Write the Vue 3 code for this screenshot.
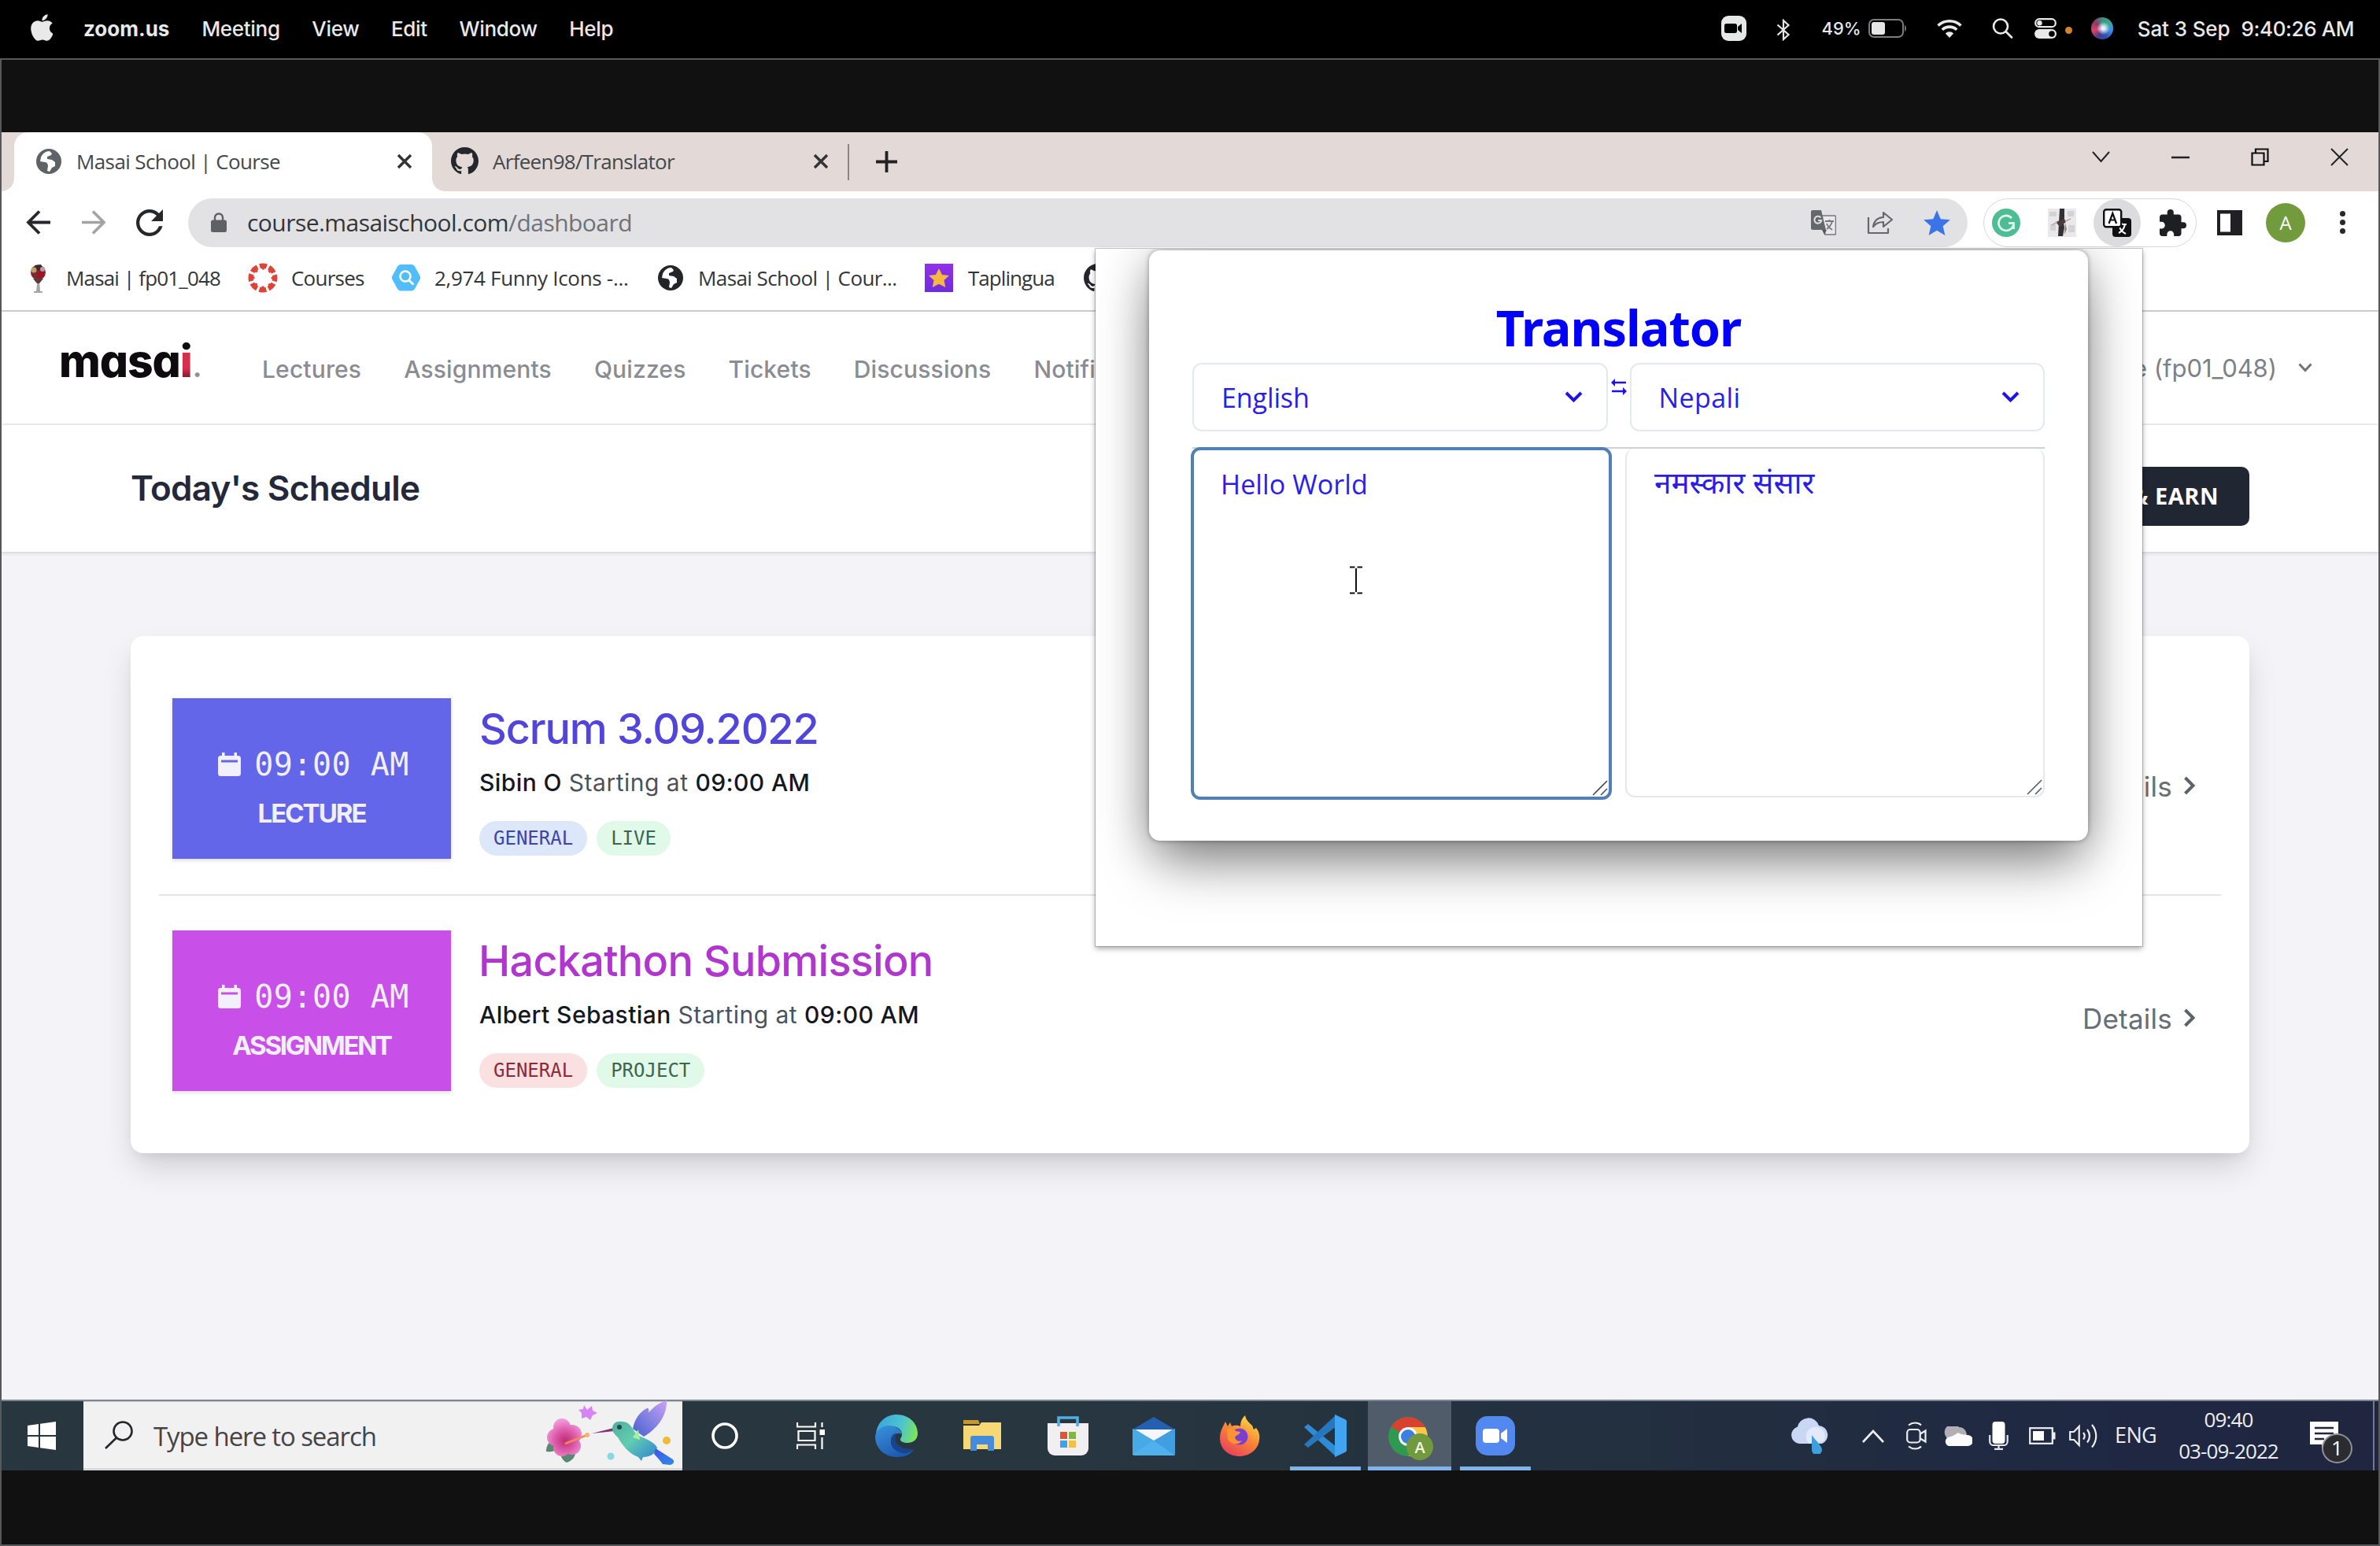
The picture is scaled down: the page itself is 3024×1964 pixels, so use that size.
<script setup>
const menus = ['Meeting', 'View', 'Edit', 'Window', 'Help']
const nav = ['Lectures', 'Assignments', 'Quizzes', 'Tickets', 'Discussions', 'Notifications']
const schedule = [
  {
    kind: 'lecture', label: 'LECTURE', title: 'Scrum 3.09.2022', host: 'Sibin O', time: '09:00 AM',
    tags: [{ text: 'GENERAL', tone: 'blue' }, { text: 'LIVE', tone: 'green' }],
  },
  {
    kind: 'assignment', label: 'ASSIGNMENT', title: 'Hackathon Submission', host: 'Albert Sebastian', time: '09:00 AM',
    tags: [{ text: 'GENERAL', tone: 'red' }, { text: 'PROJECT', tone: 'green' }],
  },
]
const githubPath = 'M8 0C3.58 0 0 3.58 0 8c0 3.54 2.29 6.53 5.47 7.59.4.07.55-.17.55-.38 0-.19-.01-.82-.01-1.49-2.01.37-2.53-.49-2.69-.94-.09-.23-.48-.94-.82-1.13-.28-.15-.68-.52-.01-.53.63-.01 1.08.58 1.23.82.72 1.21 1.87.87 2.33.66.07-.52.28-.87.51-1.07-1.78-.2-3.64-.89-3.64-3.95 0-.87.31-1.59.82-2.15-.08-.2-.36-1.02.08-2.12 0 0 .67-.21 2.2.82.64-.18 1.32-.27 2-.27s1.36.09 2 .27c1.53-1.04 2.2-.82 2.2-.82.44 1.1.16 1.92.08 2.12.51.56.82 1.27.82 2.15 0 3.07-1.87 3.75-3.65 3.95.29.25.54.73.54 1.48 0 1.07-.01 1.93-.01 2.2 0 .21.15.46.55.38A8.01 8.01 0 0 0 16 8c0-4.42-3.58-8-8-8z'
</script>

<template>
  <div class="screen">
    <header class="macbar">
      <svg class="apple" width="28" height="34" viewBox="4 30 366 452" fill="#e9e9e9"><path d="M318.7 268.7c-.2-36.7 16.4-64.4 50-84.8-18.8-26.9-47.2-41.7-84.7-44.6-35.5-2.8-74.3 20.7-88.5 20.7-15 0-49.4-19.7-76.4-19.7C63.3 141.2 4 184.8 4 273.5q0 39.3 14.4 81.2c12.8 36.7 59 126.7 107.2 125.2 25.2-.6 43-17.9 75.8-17.9 31.8 0 48.3 17.9 76.4 17.9 48.6-.7 90.4-82.5 102.6-119.3-65.2-30.7-61.7-90-61.7-91.9zm-56.6-164.2c27.3-32.4 24.8-61.9 24-72.5-24.1 1.4-52 16.4-67.9 34.9-17.5 19.8-27.8 44.3-25.6 71.9 26.1 2 49.9-11.4 69.5-34.3z"/></svg>
      <b class="app">zoom.us</b>
      <nav class="menus"><span v-for="m in menus" :key="m">{{ m }}</span></nav>
      <div class="status">
        <svg width="32" height="32" viewBox="0 0 32 32"><rect width="32" height="32" rx="9" fill="#e6e8e8"/><rect x="4" y="10" width="16" height="12" rx="2.5" fill="#000"/><path d="M21 14l5-4v12l-5-4z" fill="#000"/></svg>
        <svg class="bt" width="18" height="28" viewBox="0 0 18 28" fill="none" stroke="#e6e6e6" stroke-width="2.2"><path d="M1.500 7.500L15.500 20 9 26V2l6.500 6L1.500 20.500"/></svg>
        <span class="pct">49%</span>
        <svg class="bat" width="49" height="24" viewBox="0 0 49 24"><rect x="1" y="1" width="43" height="22" rx="6" fill="none" stroke="#7c7c7c" stroke-width="2"/><rect x="4" y="4" width="17" height="16" rx="3" fill="#e6e6e6"/><path d="M46 8c2.500 1 2.500 7 0 8z" fill="#7c7c7c"/></svg>
        <svg class="wifi" width="32" height="24" viewBox="0 0 32 24" fill="none" stroke="#e9e9e9" stroke-width="3.600"><path d="M1.500 8.500a21 21 0 0 1 29 0M6.800 13.700a13.500 13.500 0 0 1 18.400 0"/><path d="M16 24l-5.200-5.600a7.500 7.500 0 0 1 10.400 0z" fill="#e9e9e9" stroke="none"/></svg>
        <svg class="find" width="27" height="26" viewBox="0 0 27 26" fill="none" stroke="#e9e9e9" stroke-width="2.600" stroke-linecap="round"><circle cx="11" cy="10.500" r="9"/><path d="M18 17.500l7 7"/></svg>
        <svg class="cc" width="28" height="26" viewBox="0 0 28 26"><rect x="1.200" y="1.200" width="25.600" height="10" rx="5" fill="none" stroke="#e9e9e9" stroke-width="2.200"/><circle cx="6.500" cy="6.200" r="3.200" fill="#e9e9e9"/><rect y="14" width="28" height="12" rx="6" fill="#e9e9e9"/><circle cx="22" cy="20" r="3.800" fill="#000"/></svg>
        <i class="dot"></i>
        <i class="siri"></i>
        <span class="date">Sat 3 Sep</span><span class="clock">9:40:26 AM</span>
      </div>
    </header>

    <main class="frame">
      <div class="chrome">
        <div class="tabs">
          <div class="tab active">
            <svg width="32" height="32" viewBox="0 0 32 32"><circle cx="16" cy="16" r="16" fill="#5f6368"/><path d="M17 3c-5 0-9 3-11 8l-1 5 6 1c3 0 4 3 4 5l-1 6 3 1 3-5 4-2v-5l-4-3-6-1v-3l5-2 1-2z" fill="#fff"/></svg>
            <span class="tab-text t1">Masai School | Course</span>
            <svg class="x" width="20" height="20" viewBox="0 0 20 20" stroke="#333" stroke-width="3.400"><path d="M2 2l16 16M18 2L2 18"/></svg>
          </div>
          <div class="tab second">
            <svg width="35" height="35" viewBox="0 0 16 16" fill="#24262b"><path :d="githubPath"/></svg>
            <span class="tab-text t2">Arfeen98/Translator</span>
            <svg class="x" width="20" height="20" viewBox="0 0 20 20" stroke="#333" stroke-width="3.400"><path d="M2 2l16 16M18 2L2 18"/></svg>
          </div>
          <i class="sep"></i>
          <svg class="plus" width="27" height="27" viewBox="0 0 27 27" stroke="#222" stroke-width="3.800"><path d="M13.500 0v27M0 13.500h27"/></svg>
          <div class="winctl">
            <svg width="23" height="15" viewBox="0 0 23 15" fill="none" stroke="#222" stroke-width="2"><path d="M1 1l10.500 12L22 1"/></svg>
            <svg width="23" height="4" viewBox="0 0 23 4"><path d="M0 2h23" stroke="#222" stroke-width="2.500"/></svg>
            <svg width="23" height="23" viewBox="0 0 23 23" fill="none" stroke="#111" stroke-width="2.200"><path d="M1.500 6.500h15v15h-15zM6 6V1.500h15.500V17H17"/></svg>
            <svg width="23" height="23" viewBox="0 0 23 23" stroke="#222" stroke-width="2"><path d="M1 1l21 21M22 1L1 22"/></svg>
          </div>
        </div>

        <div class="toolbar">
          <svg class="back" width="31" height="31" viewBox="0 0 31 31" fill="none" stroke="#26272b" stroke-width="3.800"><path d="M31 15.500H4M17 1.500l-14 14 14 14"/></svg>
          <svg class="fwd" width="31" height="31" viewBox="0 0 31 31" fill="none" stroke="#a3a3a6" stroke-width="3.600"><path d="M0 15.500h27M14 1.500l14 14-14 14"/></svg>
          <svg class="reload" width="34" height="34" viewBox="4 4 16 16" fill="#26272b"><path d="M17.65 6.350A7.958 7.958 0 0 0 12 4c-4.420 0-7.990 3.580-7.990 8s3.570 8 7.990 8c3.730 0 6.840-2.550 7.730-6h-2.080A5.990 5.990 0 0 1 12 18c-3.310 0-6-2.690-6-6s2.690-6 6-6c1.660 0 3.140.690 4.220 1.780L13 11h7V4l-2.350 2.350z"/></svg>
          <div class="url">
            <svg class="lock" width="20" height="25" viewBox="0 0 20 25"><path d="M5 11V6.500a5 5 0 0 1 10 0V11" fill="none" stroke="#5f6063" stroke-width="2.400"/><rect y="9.500" width="20" height="15.500" rx="2.500" fill="#5f6063"/></svg>
            <span class="url-text">course.masaischool.com<em>/dashboard</em></span>
            <svg class="gtr" width="32" height="32" viewBox="0 0 32 32"><path d="M13 7h17a1.500 1.500 0 0 1 1.500 1.500v21A1.500 1.500 0 0 1 30 31H18z" fill="#e9e9eb" stroke="#77787c" stroke-width="1.600"/><path d="M2 0h11l6 25H2a2 2 0 0 1-2-2V2a2 2 0 0 1 2-2z" fill="#66676b"/><path d="M12.500 9.500a4.500 4.500 0 1 0 .8 3.500H9" fill="none" stroke="#dedee0" stroke-width="2"/><path d="M18 14h11M23.500 12v2M27 14c-1 4-4 8-7 10M20 17c1 3 4 6 7 8" fill="none" stroke="#77787c" stroke-width="1.800"/><path d="M14 25h6l-3 6z" fill="#55565a"/></svg>
            <svg class="share" width="34" height="30" viewBox="0 0 34 30" fill="none" stroke="#67686c" stroke-width="2.200" stroke-linejoin="round"><path d="M2 8v20h25v-6"/><path d="M21 8V2l11 9-11 9v-6c-6 0-10 2-13 6 1-7 5-11.500 13-12z"/></svg>
            <svg class="star" width="34" height="32" viewBox="2 2 20 19" fill="#3b73e8"><path d="M12 17.270 18.180 21l-1.640-7.030L22 9.240l-7.190-.610L12 2 9.190 8.630 2 9.240l5.460 4.730L5.820 21z"/></svg>
          </div>
          <div class="exts">
            <svg width="36" height="36" viewBox="0 0 36 36"><circle cx="18" cy="18" r="18" fill="#4dbd93"/><path d="M25 12a9.500 9.500 0 1 0 2.500 6.500H21M27.500 18.500V26" fill="none" stroke="#e8fff6" stroke-width="2.600"/></svg>
            <svg class="face" width="36" height="36" viewBox="0 0 36 36"><rect width="36" height="36" fill="#e9e8ea"/><path d="M2 4h9v6H2zM25 3h8v7h-8zM3 20h7v8H3zM26 21h8v9h-8z" fill="#d3d3d6"/><path d="M15 0h6v12l-1 6 1 6-2 11h-6l1-17z" fill="#333032"/><path d="M10 17l11-4 2 4-8 6z" fill="#4a3b3c"/><path d="M5 21l7-4M22 16l7-3" fill="none" stroke="#c3a5a0" stroke-width="1.600"/><path d="M22 18l2 8-3 7z" fill="#8c7f7f"/></svg>
            <span class="halo">
              <svg width="36" height="36" viewBox="0 0 36 36"><rect x="12" y="12" width="24" height="24" rx="4" fill="#101012"/><path d="M18 20h12M24 18v2M28 20c-1 5-4 9-8 11M21 23c1 4 4 7 8 9" fill="none" stroke="#fff" stroke-width="2"/><rect x="1.200" y="1.200" width="22" height="22" rx="3" fill="#fff" stroke="#101012" stroke-width="2.400"/><path d="M7.500 19l4.800-13 4.800 13M9 14.500h6.500" fill="none" stroke="#101012" stroke-width="2.200"/></svg>
            </span>
            <svg class="puzzle" width="34" height="34" viewBox="2 1 21 21" fill="#1e1f23"><path d="M20.500 11H19V7c0-1.100-.9-2-2-2h-4V3.500a2.500 2.500 0 0 0-5 0V5H4c-1.100 0-1.990.9-1.990 2v3.800H3.500c1.490 0 2.700 1.210 2.700 2.700s-1.210 2.700-2.700 2.700H2V20c0 1.100.9 2 2 2h3.800v-1.500c0-1.490 1.210-2.700 2.700-2.700 1.490 0 2.700 1.210 2.700 2.700V22H17c1.100 0 2-.9 2-2v-4h1.500a2.500 2.500 0 0 0 0-5z"/></svg>
          </div>
          <svg class="panel" width="32" height="32" viewBox="0 0 32 32"><rect width="32" height="32" fill="#202024"/><rect x="4" y="4.500" width="13" height="23" fill="#fff"/></svg>
          <span class="avatar">A</span>
          <span class="dots"><i></i><i></i><i></i></span>
        </div>

        <div class="bookmarks">
          <div class="bm b1"><svg width="27" height="37" viewBox="0 0 27 37"><path d="M12.500 22h2.500l1 13h3v2H8v-2h3z" fill="#a9a5a5"/><circle cx="13.500" cy="11" r="9.500" fill="#7c2a35"/><path d="M3 11l6 4M9 2l8-1 3 5-8 3z" fill="#3f2a2a"/><circle cx="8" cy="8" r="3.500" fill="#bfa06a"/><circle cx="17" cy="14" r="4.500" fill="#a5121f"/><circle cx="19" cy="7" r="3" fill="#b89cae"/><path d="M7 19h13l-5 6h-3z" fill="#5b3a38"/></svg><span>Masai | fp01_048</span></div>
          <div class="bm b2"><svg width="38" height="38" viewBox="0 0 38 38"><circle cx="19" cy="19" r="15" fill="none" stroke="#dc4439" stroke-width="7" stroke-dasharray="8.800 2.980" stroke-dashoffset="4.400"/><circle cx="19" cy="19" r="12" fill="#fff"/><circle cx="19" cy="19" r="11.500" fill="none" stroke="#dc4439" stroke-width="2" stroke-dasharray="3 6.030" stroke-dashoffset="1.500"/></svg><span>Courses</span></div>
          <div class="bm b3"><svg width="36" height="34" viewBox="0 0 36 34"><path d="M11 0h14a5 5 0 0 1 4 2.500l6 11a6 6 0 0 1 0 6.500l-6 11a5 5 0 0 1-4 2.500H11A5 5 0 0 1 7 31L1 20a6 6 0 0 1 0-6.500l6-11A5 5 0 0 1 11 0z" fill="#51bdfb"/><circle cx="17" cy="15" r="6.500" fill="none" stroke="#fff" stroke-width="2.600"/><path d="M21.500 20l6 5.500" stroke="#fff" stroke-width="3"/></svg><span>2,974 Funny Icons -...</span></div>
          <div class="bm b4"><svg width="32" height="32" viewBox="0 0 32 32"><circle cx="16" cy="16" r="16" fill="#232529"/><path d="M17 3c-5 0-9 3-11 8l-1 5 6 1c3 0 4 3 4 5l-1 6 3 1 3-5 4-2v-5l-4-3-6-1v-3l5-2 1-2z" fill="#fff"/></svg><span>Masai School | Cour...</span></div>
          <div class="bm b5"><svg width="36" height="36" viewBox="0 0 36 36"><defs><linearGradient id="tap" x1="0" y1="0" x2="0" y2="1"><stop offset="0" stop-color="#9430ea"/><stop offset="1" stop-color="#6c2ce0"/></linearGradient></defs><rect width="36" height="36" fill="url(#tap)"/><path d="M18 6l4 8 9 1-6.500 6 1.800 9-8.300-4.300L9.700 30l1.800-9L5 15l9-1z" fill="#f5b93f"/></svg><span>Taplingua</span></div>
          <div class="bm b6"><svg width="36" height="36" viewBox="0 0 16 16" fill="#24262b"><path :d="githubPath"/></svg></div>
        </div>
      </div>

      <section class="page">
        <div class="site-head">
          <span class="logo">masa<span class="logo-i">i</span><span class="logo-dot">.</span></span>
          <nav class="nav"><span v-for="n in nav" :key="n">{{ n }}</span></nav>
          <span class="user">e (fp01_048)</span>
          <svg class="user-chev" width="18" height="12" viewBox="0 0 18 12" fill="none" stroke="#707379" stroke-width="3"><path d="M1.500 1.500L9 9.500l7.500-8"/></svg>
        </div>
        <div class="title-row"><h1>Today's Schedule</h1><button>REFER &amp; EARN</button></div>

        <div class="card">
          <article v-for="s in schedule" :key="s.label" class="row" :class="s.kind">
            <div class="badge">
              <div class="badge-time">
                <svg width="29" height="30" viewBox="0 0 29 30" fill="#f3f0fd"><path d="M5 0h3.500v4h12V0H24v4h1.500A3.500 3.500 0 0 1 29 7.500v2H0v-2A3.500 3.500 0 0 1 3.500 4H5zM0 12.500h29v14A3.500 3.500 0 0 1 25.500 30h-22A3.500 3.500 0 0 1 0 26.500z"/><path d="M0 9h4v4H0zM25 9h4v4h-4z"/></svg>
                <span>{{ s.time }}</span>
              </div>
              <div class="badge-label">{{ s.label }}</div>
            </div>
            <div class="info">
              <h2>{{ s.title }}</h2>
              <p><b>{{ s.host }}</b> <span>Starting at</span> <b>{{ s.time }}</b></p>
              <div class="tags"><span v-for="t in s.tags" :key="t.text" :class="t.tone">{{ t.text }}</span></div>
            </div>
            <div class="details">Details<svg width="16" height="24" viewBox="0 0 16 24" fill="none" stroke="#5f6369" stroke-width="4"><path d="M2.500 2l10 10-10 10"/></svg></div>
          </article>
        </div>

        <aside class="popup">
          <div class="translator">
            <h3>Translator</h3>
            <div class="selects">
              <div class="select"><span class="l1">English</span><svg width="23" height="15" viewBox="0 0 23 15" fill="none" stroke="#1f14e6" stroke-width="4"><path d="M2 2l9.500 9.500L21 2"/></svg></div>
              <svg class="swap" width="20" height="21" viewBox="0 0 20 21" fill="#1c12ee"><path d="M0 5l5-5v3.700h14v2.600H5V10zM20 16l-5 5v-3.700H1v-2.600h14V11z"/></svg>
              <div class="select"><span class="l2">Nepali</span><svg width="23" height="15" viewBox="0 0 23 15" fill="none" stroke="#1f14e6" stroke-width="4"><path d="M2 2l9.500 9.500L21 2"/></svg></div>
            </div>
            <div class="areas">
              <div class="area focus">Hello World<svg class="grip" width="22" height="20" viewBox="0 0 22 20" stroke="#4a4d55" stroke-width="1.600"><path d="M1 19L19 1M11 19l8-8"/></svg></div>
              <div class="area out">नमस्कार संसार<svg class="grip" width="22" height="20" viewBox="0 0 22 20" stroke="#55585e" stroke-width="1.600"><path d="M1 19L19 1M11 19l8-8"/></svg></div>
            </div>
          </div>
          <svg class="ibeam" width="16" height="36" viewBox="0 0 16 36" fill="none" stroke="#111" stroke-width="2"><path d="M0 1.500h6.500M9.500 1.500H16M8 3v30M0 34.500h6.500M9.500 34.500H16"/></svg>
        </aside>
      </section>

      <footer class="taskbar">
        <div class="start"><svg width="36" height="36" viewBox="0 0 36 36" fill="#fff"><path d="M0 5l14-2v14H0zM16 2.700L36 0v17H16zM0 19h14v14L0 31zM16 19h20v17l-20-2.700z"/></svg></div>
        <div class="search">
          <svg width="36" height="36" viewBox="0 0 36 36" fill="none" stroke="#26262a" stroke-width="2.600"><circle cx="23" cy="13" r="11.500"/><path d="M15 21.500L1 35"/></svg>
          <span>Type here to search</span>
          <svg class="bird" width="170" height="89" viewBox="0 0 170 89">
            <defs>
              <linearGradient id="body" x1="0" y1="0" x2="1" y2="1"><stop offset="0" stop-color="#4fae9d"/><stop offset=".45" stop-color="#62cdb0"/><stop offset="1" stop-color="#2c7fd6"/></linearGradient>
              <linearGradient id="wing" x1="1" y1="0" x2="0" y2="1"><stop offset="0" stop-color="#c9a2f5"/><stop offset=".55" stop-color="#7f7fe0"/><stop offset="1" stop-color="#4560cc"/></linearGradient>
              <linearGradient id="tail" x1="0" y1="0" x2="1" y2="1"><stop offset="0" stop-color="#3f53ea"/><stop offset="1" stop-color="#2f8ce6"/></linearGradient>
              <radialGradient id="petal" gradientUnits="userSpaceOnUse" cx="26" cy="51" r="27"><stop offset="0" stop-color="#c22a70"/><stop offset=".5" stop-color="#dc5cab"/><stop offset="1" stop-color="#f29cdb"/></radialGradient>
            </defs>
            <path d="M10 50c-6 4-8 9-8 15 6 1 11 0 14-5zM20 68c1 5 4 9 8 11 6-2 10-6 11-11z" fill="#5c8873"/>
            <g fill="url(#petal)"><circle cx="22" cy="34" r="11"/><circle cx="35" cy="43" r="12"/><circle cx="14" cy="47" r="11"/><circle cx="22" cy="60" r="11"/><circle cx="35" cy="58" r="11"/></g>
            <path d="M26 55l28-11" stroke="#f08a5c" stroke-width="2.500"/><circle cx="54" cy="44" r="3" fill="#f7b173"/>
            <path d="M50 6l4 6 6-5 1 6 6 3-6 3-3 6-5-4-6 2 0-7-4-4 6-1z" fill="#d683f5"/>
            <path d="M60 42l28-7v4z" fill="#8a2c74"/>
            <path d="M112 36c2-11 8-21 18-26 2-1 3 1 2 6-1 5-6 9-9 12 9-14 17-23 32-28 1 20-13 37-29 46z" fill="url(#wing)"/>
            <path d="M86 36c0-7 6-10 12-9 9 0 12 6 17 14 6 7 22 8 28 19-2 8-9 12-18 12l-2 5-4-5c-13-5-20-15-26-25-4-4-7-7-7-11z" fill="url(#body)"/>
            <path d="M112 47l7-10 2 13z" fill="#a6f09f"/><circle cx="95" cy="34" r="3" fill="#1e4a55"/>
            <path d="M141 61l22 14c3 3 0 7-4 7l-9-1c-3-4-7-9-11-13z" fill="url(#tail)"/>
            <circle cx="155" cy="51" r="5" fill="#f0bb37"/><circle cx="84" cy="71" r="4.500" fill="#86d8e5"/>
          </svg>
        </div>
        <div class="task"><svg width="34" height="36" viewBox="0 0 34 36"><circle cx="17" cy="18" r="15" fill="none" stroke="#fff" stroke-width="3.600"/></svg></div>
        <div class="task"><svg class="tv" width="36" height="34" viewBox="0 0 36 34" fill="none" stroke="#fff" stroke-width="2.200"><path d="M1 0v5.500h23V0M1 34v-5.500h23V34M2.500 11h21v12h-21zM32.500 0v6M32.500 19v15"/><path d="M29.500 9h6.500v7h-6.500z" fill="#fff" stroke="none"/></svg></div>
        <div class="task">
          <svg width="54" height="54" viewBox="0 0 54 54"><defs><linearGradient id="e1" x1="0" y1=".3" x2="1" y2=".5"><stop offset="0" stop-color="#3aa5dd"/><stop offset=".6" stop-color="#4cc4cf"/><stop offset="1" stop-color="#7be35c"/></linearGradient><linearGradient id="e2" x1="0" y1="0" x2=".6" y2="1"><stop offset="0" stop-color="#3a93dc"/><stop offset="1" stop-color="#1d59b0"/></linearGradient></defs><path d="M1 24C3 9 14 0 27 0c16 0 27 11 27 24 0 8-6 12-13 12-5 0-9-2-9-4 0-3 2-3 2-7 0-6-6-10-13-10C11 15 3 20 1 24z" fill="url(#e1)"/><path d="M0 28c1-9 9-14 18-14 8 0 15 5 16 11-8-3-14 2-14 9 0 9 8 14 16 14 6 0 10-2 13-4-4 7-12 10-21 10C12 54 0 43 0 28z" fill="url(#e2)"/><path d="M20 33c0-6 4-9 7-9-5 11 3 20 21 20-3 4-9 6-13 5-9-1-15-8-15-16z" fill="#17448f"/></svg>
        </div>
        <div class="task"><svg width="48" height="40" viewBox="0 0 48 40"><path d="M0 0h19l2 5H0z" fill="#c99728"/><path d="M0 7h20l3-4h25v34H0z" fill="#f8d775"/><path d="M9 23a3 3 0 0 1 3-3h24a3 3 0 0 1 3 3v16h-8v-8H17v8H9z" fill="#448cdb"/></svg></div>
        <div class="task"><svg width="52" height="51" viewBox="0 0 52 51"><path d="M14 13V2h24v11" fill="none" stroke="#4fb0e6" stroke-width="3.600"/><path d="M0 9h52v32a9 9 0 0 1-9 9H9a9 9 0 0 1-9-9z" fill="#f1eff2"/><path d="M14 9v4M38 9v4" stroke="#4fb0e6" stroke-width="3.600"/><path fill="#dc5636" d="M16 20h9v9h-9z"/><path fill="#86b440" d="M27 20h9v9h-9z"/><path fill="#3fa2e8" d="M16 31h9v9h-9z"/><path fill="#f5c042" d="M27 31h9v9h-9z"/></svg></div>
        <div class="task"><svg width="54" height="49" viewBox="0 0 54 49"><path d="M0 16L27 0l27 16v4H0z" fill="#245fb0"/><path d="M3 16h48L27 31z" fill="#f3f6fa"/><path d="M0 15l3 1 24 14 27 19H2a2 2 0 0 1-2-2z" fill="#47a9e6"/><path d="M54 15v32a2 2 0 0 1-2 2L27 30z" fill="#3f9fe0"/><path d="M0 47L27 30 54 15v1L27 30l27 19H2z" fill="#55b8f2" opacity=".55"/></svg></div>
        <div class="task"><svg width="52" height="52" viewBox="0 0 52 52"><defs><linearGradient id="ff" x1=".8" y1="0" x2=".2" y2="1"><stop offset="0" stop-color="#ffe04a"/><stop offset=".45" stop-color="#fb8a35"/><stop offset="1" stop-color="#e83a5e"/></linearGradient></defs><path d="M4 16l4-8 3 6 3-5 2 5c5-2 8-1 11 0 0-6 2-10 6-14 1 6 5 9 9 13 1 2 1 3 2 5l3-2c4 5 5 10 4 15-1 12-12 21-25 21C11 52 1 42 1 29c0-5 1-9 3-13z" fill="url(#ff)"/><circle cx="26" cy="27" r="10.500" fill="#7a3fd0"/><path d="M10 18c6-3 10 0 11 2l6 1c-1 4-6 4-7 7 1 4 5 6 9 4-3 6-14 6-18-2z" fill="#fb9333"/></svg></div>
        <div class="task open"><svg width="54" height="54" viewBox="0 0 54 54"><path d="M0 16l5-4 36 29v13z" fill="#2f8bd4"/><path d="M0 38l5 4 36-27V0z" fill="#2677bd"/><path d="M39 0l13 6a3 3 0 0 1 2 3v36a3 3 0 0 1-2 3l-13 6z" fill="#41a5f2"/></svg></div>
        <div class="task open current">
          <svg width="58" height="56" viewBox="0 0 58 56"><circle cx="25" cy="25" r="25" fill="#2f9a4f"/><path d="M25 25L3.500 12.500A25 25 0 0 1 46.600 12.500z" fill="#d8412f"/><path d="M25 13h21.700A25 25 0 0 1 26 50l10-19z" fill="#f7c844"/><circle cx="25" cy="25" r="12" fill="#f4f6f8"/><circle cx="25" cy="25" r="9" fill="#3d7fe0"/><circle cx="40" cy="38" r="17" fill="#71993e"/><text x="40" y="46" text-anchor="middle" fill="#f2f6e8" font-family="Open Sans, sans-serif" font-size="20" font-weight="600">A</text></svg>
        </div>
        <div class="task open"><svg width="50" height="50" viewBox="0 0 50 50"><rect width="50" height="50" rx="15" fill="#5388f1"/><rect x="9" y="16" width="21" height="18" rx="4" fill="#fff"/><path d="M32 22l8-6v18l-8-6z" fill="#fff"/></svg></div>

        <div class="tray">
          <svg width="50" height="46" viewBox="0 0 50 46"><path d="M11 33a11 11 0 0 1-2-21.500A14 14 0 0 1 36 10a12 12 0 0 1 4 23z" fill="#c9d7f5"/><path d="M24 33a12 12 0 1 1 18-3z" fill="#e3e9f8"/><path d="M27 22c6 8 13 14 13 19a6.500 6.500 0 0 1-13 0z" fill="#3da0dc"/></svg>
          <svg class="m41" width="28" height="17" viewBox="0 0 28 17" fill="none" stroke="#eee" stroke-width="2.600"><path d="M1 16L14 2l13 14"/></svg>
          <svg class="m28" width="26" height="36" viewBox="0 0 26 36" fill="none" stroke="#eceef0" stroke-width="2.200"><rect x="1.200" y="10" width="16.500" height="16.500" rx="4"/><path d="M18 15.500l6.500-4v14l-6.500-4M3 4.500c5-4 12-4 16 0M3 31.500c5 4 12 4 16 0"/></svg>
          <svg class="m22" width="36" height="25" viewBox="0 0 36 25"><path d="M3 14A10 10 0 0 1 19 1c6 0 9 4 10 9L10 22z" fill="#b3aeb6"/><path d="M6 25a6 6 0 0 1-1-11c5-1 9-3 13-6 4 3 8 2 12 3a7 7 0 0 1 0 14z" fill="#fbfbfc"/></svg>
          <svg class="m21" width="25" height="36" viewBox="0 0 25 36"><rect x="4.500" width="16" height="28" rx="4" fill="#fff"/><path d="M1.200 17v8c0 3 2 5 4 5h14.500c2 0 4-2 4-5v-8M12.500 30v4.500M7 34.800h11" fill="none" stroke="#e6e8ec" stroke-width="2.200"/></svg>
          <svg class="m26" width="34" height="22" viewBox="0 0 34 22"><rect x="1.200" y="1.200" width="28.600" height="19.600" fill="none" stroke="#eee" stroke-width="2.200"/><path d="M30 6.500h3.500v9H30z" fill="#eee"/><path d="M5 5h14v12H5z" fill="#fff"/></svg>
          <svg class="m17" width="38" height="32" viewBox="0 0 38 32" fill="none" stroke="#eee" stroke-width="2.200"><path d="M1.200 11v10h5l6.500 7V4L6 11zM18 12c2 2.500 2 6 0 8.500M23 8c4 5 4 11.500 0 16.500M29 2c7 8.500 7 20 0 28.500"/></svg>
          <span class="lang">ENG</span>
          <div class="when"><span>09:40</span><span class="d">03-09-2022</span></div>
          <div class="notif">
            <svg width="36" height="36" viewBox="0 0 36 36"><path d="M0 0h36v29H22l-7 6v-6H0z" fill="#fff"/><path d="M6 8h24M6 15h24M6 22h12" stroke="#20263f" stroke-width="2.600"/></svg>
            <span class="count">1</span>
          </div>
          <i class="peek"></i>
        </div>
      </footer>
    </main>
  </div>
</template>

<style>
body { background: #111; overflow: hidden; }
</style>

<style scoped>
* { box-sizing: border-box; }
svg { display: block; flex: none; }
span, h1, h2, h3, p, b { white-space: nowrap; }
h1, h2, h3, p { margin: 0; }
i { display: block; }
.screen { width: 3024px; height: 1964px; background: #111; font-family: Inter, sans-serif; overflow: hidden; }

.macbar { height: 74px; background: #000; display: flex; align-items: center; padding: 0 33px 2px 39px; color: #e9e9e9; font-size: 26px; font-weight: 500; }
.apple { margin-bottom: 2px; }
.app { font-weight: 700; margin-left: 39px; }
.menus { display: flex; gap: 40.500px; margin-left: 41px; letter-spacing: -0.3px; }
.status { display: flex; align-items: center; margin-left: auto; }
.bt { margin-left: 38px; margin-top: 3px; }
.pct { font-size: 22px; margin-left: 40px; }
.bat { margin-left: 9px; }
.wifi { margin-left: 38px; }
.find { margin-left: 38px; }
.cc { margin-left: 27px; }
.dot { width: 9px; height: 9px; border-radius: 50%; background: #cf8430; margin: 5px 0 0 11px; }
.siri { width: 28px; height: 28px; border-radius: 50%; margin-left: 24px; background: radial-gradient(circle at 55% 50%, #e8f2fa 0 8%, transparent 40%), conic-gradient(from 0deg, #3f8f86, #3aa88a, #3c8ff0, #2f4fb0, #4a3c8a, #e0406a, #8a3a62, #3f8f86); }
.date { margin-left: 31px; letter-spacing: -0.1px; }
.clock { margin-left: 14px; letter-spacing: -0.4px; }

.frame { height: 1890px; border: 2px solid #575859; padding-top: 92px; }
.chrome { background: #fff; height: 228px; border-bottom: 2px solid #cbcbcd; }
.tabs { height: 75px; background: #e3dad8; display: flex; align-items: center; }
.tab { display: flex; align-items: center; height: 75px; padding-bottom: 2px; }
.tab-text { font: 400 26px/40px "Open Sans", sans-serif; color: #45474b; letter-spacing: -0.61px; }
.tab-text.t2 { letter-spacing: -0.72px; }
.active { position: relative; width: 531px; margin-left: 16px; padding: 0 25px 2px 28px; background: #fff; border-radius: 18px 18px 0 0; }
.active::before, .active::after { content: ""; position: absolute; bottom: 0; width: 16px; height: 16px; }
.active::before { left: -16px; background: radial-gradient(circle at 0 0, transparent 15.5px, #fff 16px); }
.active::after { right: -16px; background: radial-gradient(circle at 100% 0, transparent 15.5px, #fff 16px); }
.active .tab-text { margin-left: 19px; }
.second { width: 506px; margin-left: 22px; padding-left: 2px; }
.second .tab-text { margin-left: 18px; }
.tab .x { margin-left: auto; }
.second .x { margin-right: 24px; }
.sep { width: 2px; height: 46px; background: #8b8684; }
.plus { margin-left: 34px; }
.winctl { display: flex; align-items: center; gap: 78px; margin: 0 38px 12px auto; }

.toolbar { height: 79px; display: flex; align-items: center; padding-left: 31px; }
.fwd { margin-left: 40px; }
.reload { margin-left: 38px; }
.url { width: 2261px; height: 62px; margin-left: 32px; border-radius: 31px; background: #e2e1e4; display: flex; align-items: center; padding: 0 22px 0 29px; }
.url-text { font: 400 30px/40px "Open Sans", sans-serif; letter-spacing: -0.54px; color: #333539; margin-left: 26px; }
.url-text em { font-style: normal; color: #717276; }
.gtr { margin-left: auto; }
.share { margin-left: 39px; }
.star { margin-left: 38px; }
.exts { width: 271px; height: 62px; margin-left: 20px; border: 1px solid #d9d9dc; border-radius: 31px; display: flex; align-items: center; padding-left: 10px; }
.face { margin-left: 35px; }
.halo { width: 60px; height: 60px; border-radius: 50%; background: #dcdcde; display: flex; align-items: center; justify-content: center; margin-left: 22px; }
.puzzle { margin-left: 24px; }
.panel { margin-left: 26px; }
.avatar { width: 50px; height: 50px; border-radius: 50%; margin-left: 30px; background: #719b3d; color: #fff; font: 400 24px/50px "Open Sans", sans-serif; text-align: center; }
.dots { margin-left: 44px; display: flex; flex-direction: column; gap: 4px; }
.dots i { width: 7px; height: 7px; border-radius: 50%; background: #26272b; }

.bookmarks { height: 62px; display: flex; align-items: center; padding-left: 33px; font: 400 26px/40px "Open Sans", sans-serif; color: #333539; }
.bm { display: flex; align-items: center; }
.b1 span { margin-left: 22px; letter-spacing: -0.84px; }
.b1 { width: 280px; }
.b2 span { margin-left: 17px; letter-spacing: -0.76px; }
.b2 { width: 183px; }
.b3 span { margin-left: 18px; letter-spacing: -0.31px; }
.b3 { width: 338px; }
.b4 span { margin-left: 19px; letter-spacing: -0.58px; }
.b4 { width: 339px; }
.b5 span { margin-left: 19px; letter-spacing: -0.95px; }
.b5 { width: 202px; }

.page { position: relative; height: 1382px; background: #f4f3f8; }
.site-head { height: 144px; background: #fff; border-bottom: 2px solid #e9e9ec; display: flex; align-items: center; padding-left: 73px; }
.logo { font-size: 57px; font-weight: 800; font-feature-settings: "cv11"; line-height: 60px; letter-spacing: -1.100px; margin-bottom: 7px; width: 257px; color: #0d0b0d; }
.logo-i { color: transparent; background: linear-gradient(#0d0b0d 0 21px, #d6304c 21px 44px, #5a1420 60px); background-clip: text; }
.logo-dot { color: #8f8f94; font-size: 32px; margin-left: 1px; }
.nav { display: flex; gap: 54px; font-size: 30px; letter-spacing: 0.15px; color: #898c93; font-weight: 500; line-height: 40px; margin: 4px 0 0 1px; }
.user { margin-left: auto; font-size: 31px; letter-spacing: -0.05px; color: #7d8086; }
.user-chev { margin: 0 84px 0 27px; }
.title-row { height: 162px; background: #fff; border-bottom: 1px solid #dadadd; box-shadow: 0 2px 4px rgba(0, 0, 0, 0.08); display: flex; align-items: center; justify-content: space-between; padding: 0 164px 0 164px; }
.title-row h1 { font-size: 44px; font-weight: 600; letter-spacing: -0.72px; color: #23283a; line-height: 50px; margin-bottom: 2px; }
.title-row button { height: 75px; width: 330px; border: 0; border-radius: 10px; background: #212633; color: #fff; font: 700 29px/40px "Open Sans", sans-serif; letter-spacing: 0.5px; text-align: right; padding: 0 39px 0 0; margin-top: 19px; }

.card { width: 2692px; height: 657px; margin: 106px 0 0 164px; background: #fff; border-radius: 16px; padding: 34px 36px; box-shadow: 0 20px 40px -6px rgba(0, 0, 0, 0.17), 0 8px 14px -6px rgba(0, 0, 0, 0.08); }
.row { height: 294px; display: flex; padding: 45px 32px 0 17px; }
.row + .row { border-top: 2px solid #e4e4e7; padding-top: 44px; }
.badge { width: 354px; height: 204px; padding-top: 60px; text-align: center; background: #6366e9; color: #f1effc; box-shadow: 0 2px 5px rgba(0, 0, 0, 0.15); flex: none; }
.assignment .badge { background: #c94fe9; }
.badge-time { display: flex; align-items: center; justify-content: center; gap: 17px; height: 48px; padding-left: 5px; }
.badge-time span { font: 400 40px/48px "DejaVu Sans Mono", monospace; letter-spacing: 0.5px; }
.badge-label { font-size: 33px; font-weight: 700; line-height: 48px; margin-top: 14px; letter-spacing: -2px; }
.assignment .badge-label { letter-spacing: -2.3px; }
.info { margin-left: 36px; padding-top: 7px; }
.info h2 { font-size: 54px; font-weight: 500; line-height: 64px; letter-spacing: -1.15px; color: #5145dc; }
.assignment h2 { color: #b136cd; letter-spacing: -0.75px; margin-left: -1px; }
.info p { font-size: 30px; line-height: 40px; margin-top: 16px; color: #4d515b; letter-spacing: 0.5px; }
.info p b { font-weight: 500; color: #15181f; letter-spacing: 0.4px; }
.tags { display: flex; gap: 12px; margin-top: 29px; }
.tags span { height: 44px; border-radius: 22px; padding: 0 18px; font: 400 24px/44px "DejaVu Sans Mono", monospace; }
.blue { background: #dde7fa; color: #3d46a8; }
.green { background: #e1f9e8; color: #3b6650; }
.red { background: #fae0e1; color: #8a2c38; }
.details { margin-left: auto; height: 204px; padding-top: 19px; display: flex; align-items: center; gap: 14px; font-size: 35px; letter-spacing: 0.25px; color: #696d74; }
.details svg { margin-bottom: 1px; }

.popup { position: absolute; left: 1390px; top: -80px; width: 1330px; height: 886px; background: #fff; box-shadow: 0 0 0 1px rgba(0, 0, 0, 0.2), 0 3px 7px rgba(0, 0, 0, 0.35); padding: 2px 0 0 68px; overflow: hidden; }
.translator { position: relative; width: 1193px; height: 750px; background: #fff; border-radius: 14px; padding: 0 55px; box-shadow: 0 40px 70px -12px rgba(0, 0, 0, 0.36), 0 8px 60px rgba(0, 0, 0, 0.3), 0 0 6px rgba(0, 0, 0, 0.35); }
.translator h3 { font: 700 63px/90px "Noto Sans", sans-serif; letter-spacing: -1.05px; color: #0000fb; text-align: center; padding-top: 53px; }
.selects { display: flex; height: 87px; }
.select { flex: 1; border: 2px solid #e4e9ef; border-radius: 12px; display: flex; align-items: center; justify-content: space-between; padding: 0 30px 0 35px; font: 400 34px/50px "Open Sans", sans-serif; color: #2a1dec; }
.l1 { letter-spacing: -0.1px; }
.l2 { letter-spacing: 0.4px; }
.swap { margin: 20px 4px 0; }
.areas { display: flex; justify-content: space-between; margin-top: 20px; border-top: 2px solid #cdd1d8; height: 450px; }
.area { position: relative; padding: 20px 0 0 35px; font: 400 34px/50px "Open Sans", sans-serif; color: #2a1dec; background: #fff; }
.focus { width: 535px; height: 448px; border: 4px solid #5080b6; border-radius: 12px; margin: -2px 0 0 -2px; letter-spacing: 0.1px; padding: 18px 0 0 34px; }
.out { width: 533px; height: 443px; border: 2px solid #e5e8ec; border-top: 0; border-radius: 12px; font-family: "Noto Sans", sans-serif; font-size: 38.700px; padding-top: 17px; }
.grip { position: absolute; right: -1px; bottom: 1px; }
.ibeam { position: absolute; left: 323px; top: 403px; }

.taskbar { height: 90px; border-top: 2px solid #7d878f; display: flex; background: linear-gradient(90deg, #27363f 0, #27363f 45%, #222f3f 70%, #1f2743 90%, #20263f); }
.start { width: 104px; display: flex; align-items: center; justify-content: center; padding: 0 2px 0 0; }
.search { width: 761px; background: #f2f1f2; border-top: 1px solid #c6c6c8; border-bottom: 3px solid #d9d9db; display: flex; align-items: center; padding-left: 27px; }
.search span { font: 400 33px/50px "Open Sans", sans-serif; letter-spacing: -1.100px; color: #444548; margin: 3px 0 0 26px; }
.bird { margin-left: auto; margin-right: 5px; }
.task { width: 108.900px; display: flex; align-items: center; justify-content: center; position: relative; }
.open::after { content: ""; position: absolute; left: 10px; right: 9px; bottom: 0; height: 5px; background: #80b2ea; }
.current { width: 106px; margin: 0 1px 0 0; background: #505c69; }
.current::after { left: 0; right: 0; }
.current svg { margin: 8px 0 0 4px; }
.tray { margin-left: auto; display: flex; align-items: center; color: #ecedf0; font: 400 27px/40px "Open Sans", sans-serif; }
.m41 { margin-left: 41px; }
.m28 { margin-left: 28px; }
.m22 { margin-left: 22px; }
.m21 { margin-left: 21px; }
.m26 { margin-left: 26px; }
.m17 { margin-left: 17px; }
.lang { margin-left: 20px; letter-spacing: -0.67px; margin-bottom: 3px; }
.when { display: flex; flex-direction: column; align-items: center; width: 127px; margin: 0 0 2px 28px; font-size: 26px; letter-spacing: -0.9px; }
.notif { position: relative; margin-left: 40px; width: 54px; }
.count { position: absolute; left: 15px; top: 15px; width: 39px; height: 38px; border-radius: 50%; background: #2b2b30; border: 2px solid #8e9096; color: #fff; font-size: 26px; line-height: 33px; text-align: center; }
.peek { width: 2px; height: 88px; background: #737994; margin: 0 5px 0 26px; }
</style>
